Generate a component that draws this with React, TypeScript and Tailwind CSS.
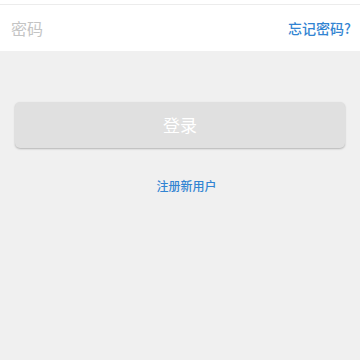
export default function App() {
  const font = { fontFamily: '"Noto Sans CJK SC", "Noto Sans", sans-serif' };
  return (
    <div className="w-[360px] h-[360px] bg-[#f0f0f0] flex flex-col" style={font}>
      <div className="h-[5px] bg-white border-b border-[#ececec]" />
      <div className="h-[46px] bg-white flex items-center justify-between pl-[11px] pr-[9px]">
        <span className="text-[16px] text-[#c4c4c4]">密码</span>
        <span className="text-[14px] font-medium text-[#3284d2]">忘记密码?</span>
      </div>
      <div className="px-[15px] pt-[51px]">
        <button className="w-full h-[46px] rounded-[5px] bg-[#e0e0e0] shadow-[0_1px_2px_rgba(0,0,0,0.25)] text-white text-[17px] flex items-center justify-center">
          登录
        </button>
      </div>
      <div className="flex justify-center pt-[29px] pl-[13px]">
        <span className="text-[12px] font-medium text-[#3284d2]">注册新用户</span>
      </div>
    </div>
  );
}
